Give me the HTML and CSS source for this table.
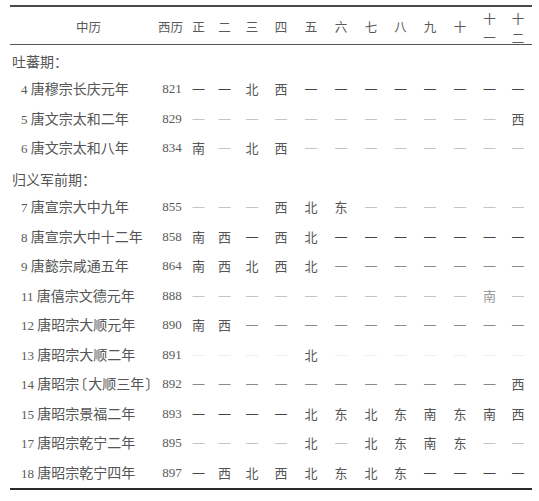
FILE: index.html
```html
<!DOCTYPE html>
<html lang="zh">
<head>
<meta charset="utf-8">
<link rel="stylesheet" href="styles.css">
</head>
<body>
<div class="table">
  <div class="row head">
    <div class="c name">中历</div>
    <div class="c yr">西历</div>
    <div class="c">正</div>
    <div class="c">二</div>
    <div class="c">三</div>
    <div class="c">四</div>
    <div class="c">五</div>
    <div class="c">六</div>
    <div class="c">七</div>
    <div class="c">八</div>
    <div class="c">九</div>
    <div class="c">十</div>
    <div class="c stack"><span>十</span><span>一</span></div>
    <div class="c stack"><span>十</span><span>二</span></div>
  </div>
  <div class="body">
    <div class="row cat"><div class="c catname">吐蕃期：</div></div>

    <div class="row">
      <div class="c label"><span class="num">4</span> 唐穆宗长庆元年</div>
      <div class="c yr">821</div>
      <div class="c d">一</div><div class="c d">一</div><div class="c">北</div><div class="c">西</div>
      <div class="c d">一</div><div class="c d">一</div><div class="c d">一</div><div class="c d">一</div>
      <div class="c d">一</div><div class="c d">一</div><div class="c d">一</div><div class="c d">一</div>
    </div>

    <div class="row">
      <div class="c label"><span class="num">5</span> 唐文宗太和二年</div>
      <div class="c yr">829</div>
      <div class="c l">一</div><div class="c l">一</div><div class="c l">一</div><div class="c l">一</div>
      <div class="c l">一</div><div class="c l">一</div><div class="c l">一</div><div class="c l">一</div>
      <div class="c l">一</div><div class="c l">一</div><div class="c l">一</div><div class="c">西</div>
    </div>

    <div class="row">
      <div class="c label"><span class="num">6</span> 唐文宗太和八年</div>
      <div class="c yr">834</div>
      <div class="c">南</div><div class="c l">一</div><div class="c">北</div><div class="c">西</div>
      <div class="c l">一</div><div class="c l">一</div><div class="c l">一</div><div class="c l">一</div>
      <div class="c l">一</div><div class="c l">一</div><div class="c l">一</div><div class="c l">一</div>
    </div>

    <div class="row cat"><div class="c catname">归义军前期：</div></div>

    <div class="row">
      <div class="c label"><span class="num">7</span> 唐宣宗大中九年</div>
      <div class="c yr">855</div>
      <div class="c l">一</div><div class="c l">一</div><div class="c l">一</div><div class="c">西</div>
      <div class="c">北</div><div class="c">东</div><div class="c l">一</div><div class="c l">一</div>
      <div class="c l">一</div><div class="c l">一</div><div class="c l">一</div><div class="c l">一</div>
    </div>

    <div class="row">
      <div class="c label"><span class="num">8</span> 唐宣宗大中十二年</div>
      <div class="c yr">858</div>
      <div class="c">南</div><div class="c">西</div><div class="c d">一</div><div class="c">西</div>
      <div class="c">北</div><div class="c d">一</div><div class="c d">一</div><div class="c d">一</div>
      <div class="c d">一</div><div class="c d">一</div><div class="c d">一</div><div class="c d">一</div>
    </div>

    <div class="row">
      <div class="c label"><span class="num">9</span> 唐懿宗咸通五年</div>
      <div class="c yr">864</div>
      <div class="c">南</div><div class="c">西</div><div class="c">北</div><div class="c">西</div>
      <div class="c">北</div><div class="c m">一</div><div class="c m">一</div><div class="c m">一</div>
      <div class="c m">一</div><div class="c m">一</div><div class="c m">一</div><div class="c m">一</div>
    </div>

    <div class="row">
      <div class="c label"><span class="num">11</span> 唐僖宗文德元年</div>
      <div class="c yr">888</div>
      <div class="c l">一</div><div class="c l">一</div><div class="c l">一</div><div class="c l">一</div>
      <div class="c l">一</div><div class="c l">一</div><div class="c l">一</div><div class="c l">一</div>
      <div class="c l">一</div><div class="c l">一</div><div class="c lt">南</div><div class="c l">一</div>
    </div>

    <div class="row">
      <div class="c label"><span class="num">12</span> 唐昭宗大顺元年</div>
      <div class="c yr">890</div>
      <div class="c">南</div><div class="c">西</div><div class="c m">一</div><div class="c m">一</div>
      <div class="c m">一</div><div class="c m">一</div><div class="c m">一</div><div class="c m">一</div>
      <div class="c m">一</div><div class="c m">一</div><div class="c m">一</div><div class="c m">一</div>
    </div>

    <div class="row">
      <div class="c label"><span class="num">13</span> 唐昭宗大顺二年</div>
      <div class="c yr">891</div>
      <div class="c f">一</div><div class="c f">一</div><div class="c f">一</div><div class="c f">一</div>
      <div class="c">北</div><div class="c f">一</div><div class="c f">一</div><div class="c f">一</div>
      <div class="c f">一</div><div class="c f">一</div><div class="c f">一</div><div class="c f">一</div>
    </div>

    <div class="row">
      <div class="c label"><span class="num">14</span> 唐昭宗<span class="br">〔</span>大顺三年<span class="br">〕</span></div>
      <div class="c yr">892</div>
      <div class="c m">一</div><div class="c m">一</div><div class="c m">一</div><div class="c m">一</div>
      <div class="c m">一</div><div class="c m">一</div><div class="c m">一</div><div class="c m">一</div>
      <div class="c m">一</div><div class="c m">一</div><div class="c m">一</div><div class="c">西</div>
    </div>

    <div class="row">
      <div class="c label"><span class="num">15</span> 唐昭宗景福二年</div>
      <div class="c yr">893</div>
      <div class="c d">一</div><div class="c d">一</div><div class="c d">一</div><div class="c d">一</div>
      <div class="c">北</div><div class="c">东</div><div class="c">北</div><div class="c">东</div>
      <div class="c">南</div><div class="c">东</div><div class="c">南</div><div class="c">西</div>
    </div>

    <div class="row">
      <div class="c label"><span class="num">17</span> 唐昭宗乾宁二年</div>
      <div class="c yr">895</div>
      <div class="c l">一</div><div class="c l">一</div><div class="c l">一</div><div class="c l">一</div>
      <div class="c">北</div><div class="c l">一</div><div class="c">北</div><div class="c">东</div>
      <div class="c">南</div><div class="c">东</div><div class="c l">一</div><div class="c l">一</div>
    </div>

    <div class="row">
      <div class="c label"><span class="num">18</span> 唐昭宗乾宁四年</div>
      <div class="c yr">897</div>
      <div class="c d">一</div><div class="c">西</div><div class="c">北</div><div class="c">西</div>
      <div class="c">北</div><div class="c">东</div><div class="c">北</div><div class="c">东</div>
      <div class="c d">一</div><div class="c d">一</div><div class="c d">一</div><div class="c d">一</div>
    </div>
  </div>
</div>
</body>
</html>
```

FILE: styles.css
```css
html, body {
  margin: 0;
  padding: 0;
  background: #ffffff;
}

body {
  font-family: "Noto Sans CJK SC", "Noto Sans CJK TC", sans-serif;
  color: #555555;
}

.table {
  margin: 5px 7px 0 10px;
  width: 522px;
  border-top: 2px solid #4a4a4a;
  border-bottom: 2px solid #2a2a2a;
}

.row {
  display: grid;
  grid-template-columns: 148px 28px 25px 27px 28px 30px 30px 30px 30px 29px 30px 30px 29px 28px;
  align-items: center;
  height: 29.5px;
}

.row.head {
  height: 37px;
  border-bottom: 1px solid #555555;
  color: #5a5a5a;
}

.c {
  text-align: center;
  font-size: 13px;
  line-height: 16px;
  white-space: nowrap;
}

.head .c {
  font-size: 12.5px;
}

.head .name {
  text-align: left;
  padding-left: 66px;
}

.stack {
  display: flex;
  flex-direction: column;
  align-items: center;
  line-height: 19px;
  padding-top: 2px;
}

.yr {
  font-family: "Liberation Serif", serif;
  font-size: 13px;
  color: #5a5a5a;
}

.head .yr {
  font-family: "Noto Sans CJK SC", sans-serif;
  font-size: 12.5px;
  text-align: right;
  padding-right: 3px;
}

.cat {
  display: flex;
}

.catname {
  text-align: left;
  padding-left: 2px;
  font-size: 14px;
  padding-top: 3px;
}

.label {
  text-align: left;
  padding-left: 11px;
  font-size: 14px;
}

.br {
  font-feature-settings: "halt";
  margin: 0 1px;
}

.num {
  font-family: "Liberation Serif", serif;
  font-size: 13px;
  color: #5a5a5a;
}

.d {
  color: #444444;
}

.m {
  color: #8a8a8a;
}

.l {
  color: #c4c4c4;
}

.lt {
  color: #9a9a9a;
}

.f {
  color: #ededed;
}
```
